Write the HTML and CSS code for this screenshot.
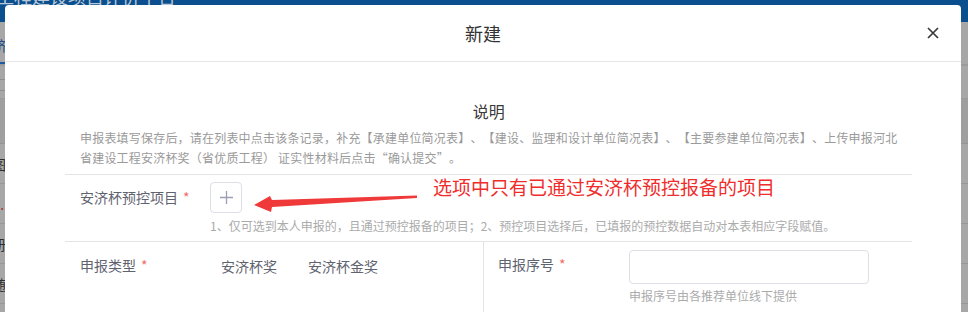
FILE: index.html
```html
<!DOCTYPE html>
<html lang="zh-CN">
<head>
<meta charset="utf-8">
<title>新建</title>
<link rel="stylesheet" href="styles.css">
</head>
<body>
<div class="page">
  <div class="topbar"><span class="brand">工程建设项目评价平台</span></div>
  <div class="tabs"><span class="tab">济</span></div>
  <div class="toolbar"><span class="mini-input"></span></div>
  <div class="thead"></div>
  <div class="trow"><span class="cell">图</span></div>
  <div class="trow"><span class="cell">E<em>.</em></span></div>
  <div class="trow"><span class="cell">册</span></div>
  <div class="trow"><span class="cell">随</span></div>
</div>

<div class="modal">
  <div class="modal-header">
    <span></span>
    <span class="modal-title">新建</span>
    <span class="modal-close">
      <svg width="12" height="12" viewBox="0 0 12 12"><path d="M1 1L11 11M11 1L1 11" stroke="#3a3a3a" stroke-width="1.7" fill="none"/></svg>
    </span>
  </div>
  <div class="modal-body">
    <div class="content">
      <div class="note-title">说明</div>
      <div class="note-desc">申报表填写保存后，请在列表中点击该条记录，补充【承建单位简况表】、【建设、监理和设计单位简况表】、【主要参建单位简况表】、上传申报河北<br>省建设工程安济杯奖（省优质工程） 证实性材料后点击“确认提交”。</div>

      <div class="row row-project">
        <div class="label label-wide">安济杯预控项目<span class="req">*</span></div>
        <div class="field">
          <div class="plus-box">
            <svg width="13" height="13" viewBox="0 0 13 13"><path d="M6.5 0V13M0 6.5H13" stroke="#9aa0b2" stroke-width="1.3" fill="none"/></svg>
          </div>
          <div class="hint">1、仅可选到本人申报的，且通过预控报备的项目；2、预控项目选择后，已填报的预控数据自动对本表相应字段赋值。</div>
        </div>
        <svg class="anno-arrow" width="180" height="32" viewBox="0 0 180 32">
          <polygon points="9,20 25,11 27,15 172,10.5 172,13 27,22 26,27" fill="#f03a3a"/>
        </svg>
        <div class="anno-text">选项中只有已通过安济杯预控报备的项目</div>
      </div>

      <div class="row row-split">
        <div class="col col-left">
          <div class="label label-type">申报类型<span class="req">*</span></div>
          <div class="options">
            <span class="opt">安济杯奖</span>
            <span class="opt">安济杯金奖</span>
          </div>
        </div>
        <div class="col col-right">
          <div class="label label-seq">申报序号<span class="req">*</span></div>
          <div class="field">
            <div class="text-input"></div>
            <div class="hint">申报序号由各推荐单位线下提供</div>
          </div>
        </div>
      </div>
    </div>
    <div class="scrollbar"><div class="thumb"></div></div>
  </div>
</div>
</body>
</html>
```

FILE: styles.css
```css
* { box-sizing: border-box; }

html, body {
  margin: 0;
  padding: 0;
  height: 312px;
  overflow: hidden;
}

body {
  background: #a7a7a7;
  font-family: "Noto Sans CJK SC", "Noto Sans", "Liberation Sans", sans-serif;
  text-spacing-trim: space-all;
  position: relative;
}

/* dimmed background page */
.page {
  width: 968px;
}

.topbar {
  height: 22px;
  background: #0c4f8e;
  overflow: hidden;
}

.brand {
  display: block;
  margin-top: -13px;
  margin-left: -4px;
  font-size: 18px;
  line-height: 18px;
  color: #b9c8d8;
}

.tabs {
  height: 43px;
  border-bottom: 1px solid #9a9a9a;
  display: flex;
  align-items: flex-end;
}

.tab {
  display: block;
  margin-left: -7px;
  width: 40px;
  padding-bottom: 8px;
  font-size: 14px;
  line-height: 18px;
  color: #24508a;
  border-bottom: 2px solid #1f5aa0;
}

.toolbar {
  height: 34px;
  border-top: 1px solid #9c9c9c;
  border-bottom: 1px solid #9a9a9a;
  padding-top: 13px;
}

.mini-input {
  display: block;
  width: 30px;
  height: 12px;
  margin-left: -20px;
  border: 1px solid #8e8e8e;
}

.thead {
  height: 45px;
  background: #9f9f9f;
  border-bottom: 1px solid #949494;
}

.trow {
  height: 40px;
  border-bottom: 1px solid #979797;
  padding-top: 10px;
}

.cell {
  display: block;
  margin-left: -8px;
  font-size: 14px;
  line-height: 20px;
  color: #2f2f2f;
}

.cell em {
  font-style: normal;
  color: #a33;
}

/* modal */
.modal {
  position: absolute;
  top: 5px;
  left: 5px;
  width: 956px;
  height: 400px;
  background: #fff;
  border-radius: 4px 4px 0 0;
  overflow: hidden;
  display: flex;
  flex-direction: column;
}

.modal-header {
  height: 57px;
  flex: none;
  border-bottom: 1px solid #e6e6e6;
  display: grid;
  grid-template-columns: 1fr auto 1fr;
  align-items: center;
}

.modal-title {
  font-size: 18px;
  line-height: 24px;
  color: #333;
  padding-bottom: 1px;
}

.modal-close {
  justify-self: end;
  margin-right: 22px;
  width: 12px;
  height: 12px;
  display: flex;
}

.modal-body {
  flex: 1;
  display: flex;
}

.content {
  flex: 1;
  padding: 37px 49px 0 60px;
}

.scrollbar {
  width: 12px;
  flex: none;
  background: #f2f2f2;
}

.thumb {
  width: 8px;
  height: 73px;
  margin: 0 auto;
  background: #a3a3a3;
  border-radius: 4px;
}

.note-title {
  text-align: center;
  font-size: 16px;
  line-height: 24px;
  color: #3a3a3a;
}

.note-desc {
  margin-top: 5px;
  padding: 0 15px 6px;
  font-size: 12px;
  line-height: 20px;
  letter-spacing: 0.2px;
  color: #9a9a9a;
  border-bottom: 1px solid #e4e4e4;
  white-space: nowrap;
}

.row {
  border-bottom: 1px solid #e4e4e4;
}

.row-project {
  position: relative;
  display: flex;
  padding: 7px 0 5px 15px;
}

.label {
  flex: none;
  font-size: 14px;
  color: #5f6370;
}

.req {
  color: #f56c6c;
  margin-left: 5px;
}

.label-wide {
  width: 130px;
  line-height: 31px;
}

.plus-box {
  width: 32px;
  height: 31px;
  border: 1px solid #dcdfe6;
  border-radius: 4px;
  display: flex;
  align-items: center;
  justify-content: center;
}

.hint {
  margin-top: 3px;
  font-size: 12px;
  line-height: 20px;
  color: #ababab;
  white-space: nowrap;
}

.anno-arrow {
  position: absolute;
  left: 180px;
  top: 10px;
}

.anno-text {
  position: absolute;
  left: 368px;
  top: 1px;
  font-size: 19px;
  line-height: 22px;
  color: #f02d2d;
  white-space: nowrap;
}

.row-split {
  display: flex;
  height: 80px;
}

.col {
  display: flex;
  padding-top: 8px;
}

.col-left {
  width: 419px;
  border-right: 1px solid #e4e4e4;
  padding-left: 15px;
}

.col-right {
  flex: 1;
  padding-left: 14px;
}

.label-type {
  width: 141px;
  line-height: 30px;
}

.options {
  display: flex;
  gap: 31px;
  font-size: 14px;
  line-height: 32px;
  color: #5f6370;
}

.label-seq {
  width: 131px;
  line-height: 28px;
}

.text-input {
  width: 240px;
  height: 34px;
  border: 1px solid #dcdfe6;
  border-radius: 4px;
}

.col-right .hint {
  margin-top: 2px;
}
```
